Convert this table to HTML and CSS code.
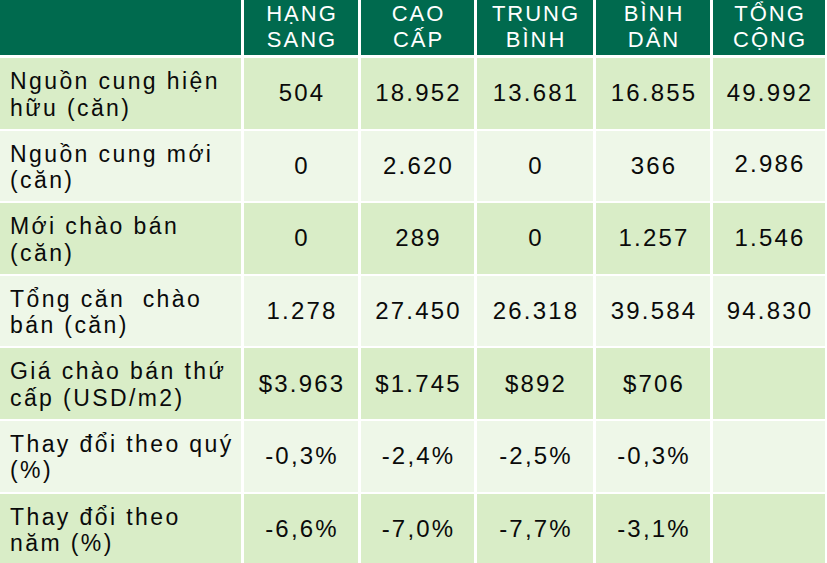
FILE: index.html
```html
<!DOCTYPE html>
<html lang="vi">
<head>
<meta charset="utf-8">
<title>Bảng nguồn cung</title>
<link rel="stylesheet" href="styles.css">
</head>
<body>
<div class="table">
  <div class="hd"></div>
  <div class="hd">HẠNG<br>SANG</div>
  <div class="hd">CAO<br>CẤP</div>
  <div class="hd">TRUNG<br>BÌNH</div>
  <div class="hd">BÌNH<br>DÂN</div>
  <div class="hd">TỔNG<br>CỘNG</div>

  <div class="lbl dark">Nguồn cung hiện<br>hữu (căn)</div>
  <div class="num dark">504</div>
  <div class="num dark">18.952</div>
  <div class="num dark">13.681</div>
  <div class="num dark">16.855</div>
  <div class="num dark">49.992</div>

  <div class="lbl light">Nguồn cung mới<br>(căn)</div>
  <div class="num light">0</div>
  <div class="num light">2.620</div>
  <div class="num light">0</div>
  <div class="num light">366</div>
  <div class="num light up">2.986</div>

  <div class="lbl dark">Mới chào bán<br>(căn)</div>
  <div class="num dark">0</div>
  <div class="num dark">289</div>
  <div class="num dark">0</div>
  <div class="num dark">1.257</div>
  <div class="num dark">1.546</div>

  <div class="lbl light">Tổng căn&nbsp; chào<br>bán (căn)</div>
  <div class="num light">1.278</div>
  <div class="num light">27.450</div>
  <div class="num light">26.318</div>
  <div class="num light">39.584</div>
  <div class="num light">94.830</div>

  <div class="lbl dark">Giá chào bán thứ<br>cấp (USD/m2)</div>
  <div class="num dark">$3.963</div>
  <div class="num dark">$1.745</div>
  <div class="num dark">$892</div>
  <div class="num dark">$706</div>
  <div class="num dark"></div>

  <div class="lbl light">Thay đổi theo quý<br>(%)</div>
  <div class="num light">-0,3%</div>
  <div class="num light">-2,4%</div>
  <div class="num light">-2,5%</div>
  <div class="num light">-0,3%</div>
  <div class="num light"></div>

  <div class="lbl dark">Thay đổi theo<br>năm (%)</div>
  <div class="num dark">-6,6%</div>
  <div class="num dark">-7,0%</div>
  <div class="num dark">-7,7%</div>
  <div class="num dark">-3,1%</div>
  <div class="num dark"></div>
</div>
</body>
</html>
```
FILE: styles.css
```css
html, body {
  margin: 0;
  padding: 0;
  background: #ffffff;
  overflow: hidden;
}

body {
  width: 827px;
  height: 563px;
  font-family: "Liberation Sans", Arial, sans-serif;
}

.table {
  display: grid;
  grid-template-columns: 241px 114px 113px 116px 114px 112px;
  grid-template-rows: 56px repeat(7, 70.6px);
  column-gap: 3px;
  row-gap: 2px;
  width: 825px;
  background: #ffffff;
}

.hd {
  background: #006a4e;
  color: #ffffff;
  font-size: 22px;
  line-height: 26px;
  letter-spacing: 2px;
  text-align: center;
  padding: 1px 0 0 2px;
  margin-bottom: 1px;
}

.dark {
  background: #d9edc7;
}

.light {
  background: #eef7e8;
}

.lbl {
  color: #0a0a0a;
  font-size: 23px;
  line-height: 26.5px;
  letter-spacing: 2.4px;
  padding: 10px 0 0 10px;
  white-space: nowrap;
}

.num {
  display: flex;
  align-items: center;
  justify-content: center;
  color: #0a0a0a;
  font-size: 24px;
  letter-spacing: 2.2px;
  padding-left: 2px;
}

.up {
  align-items: flex-start;
  padding-top: 19px;
}
```
